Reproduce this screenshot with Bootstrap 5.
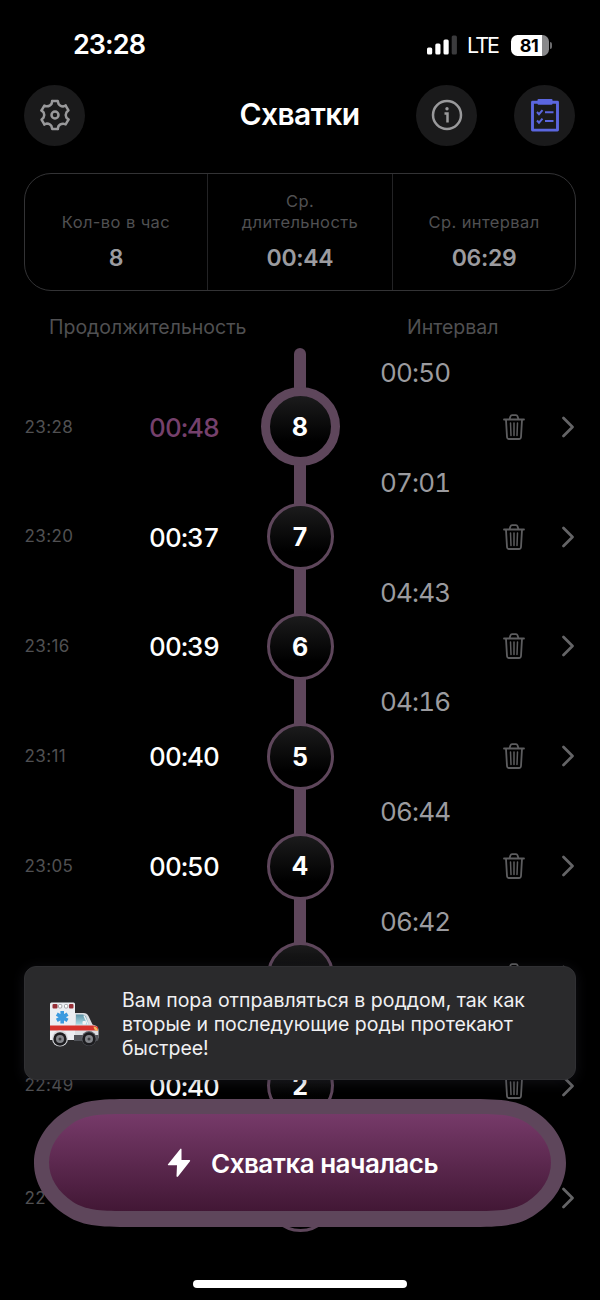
<!DOCTYPE html>
<html lang="ru" data-bs-theme="dark">
<head>
<meta charset="utf-8">
<meta name="viewport" content="width=device-width, initial-scale=1">
<title>Схватки</title>
<link href="https://cdn.jsdelivr.net/npm/bootstrap@5.3.0/dist/css/bootstrap.min.css" rel="stylesheet">
<style>
  :root { --plum: #5e465b; --dim: #505052; --soft: #9b9b9f; }
  body { background: #000; font-family: Inter, "Liberation Sans", sans-serif; color: #fff; }
  .screen { width: 600px; height: 1300px; background: #000; }
  .status { height: 84px; padding: 6px 48px 0 73px; }
  .clock { font-size: 27px; font-weight: 600; letter-spacing: -.95px; padding-top: 1px; }
  .lte { font-size: 21.5px; font-weight: 400; letter-spacing: -2px; margin: 0 12.5px 0 10.5px; }
  .battery { width: 38px; height: 21px; border-radius: 6.5px; background: linear-gradient(90deg, #fff 82%, #88888a 82%); color: #000; font-size: 18px; font-weight: 700; letter-spacing: -.4px; line-height: 21px; padding-right: 1px; }
  .battery-tip { width: 2px; height: 7px; border-radius: 0 3px 3px 0; background: #6b6b6d; margin-left: 1.5px; }
  .topbar { height: 62px; padding: 0 25px 0 24px; display: grid; grid-template-columns: 1fr auto 1fr; align-items: center; }
  .round-btn { width: 61px; height: 61px; border-radius: 50%; background: #1a1a1b; padding: 0; border: 0; }
  .title-text { font-size: 30px; font-weight: 600; line-height: 34px; letter-spacing: -.6px; padding-bottom: 2px; }
  .stats { margin: 27px 24px 0; height: 118px; border: 1.5px solid #333335; border-radius: 27px; }
  .stat { flex: 1 1 0; padding-bottom: 18px; }
  .stat:nth-child(2) { flex-grow: 1.012; }
  .stat + .stat { border-left: 1px solid #232325; }
  .stat-label { font-size: 16.5px; line-height: 21px; letter-spacing: .4px; color: var(--dim); }
  .stat-value { font-size: 23px; line-height: 28px; font-weight: 600; color: var(--soft); margin-top: 11px; letter-spacing: -.3px; }
  .heads { height: 57px; padding: 21px 0 0 49px; font-size: 19.5px; line-height: 30px; letter-spacing: 0; color: var(--dim); }
  .head-left { width: 358px; }
  .stub { width: 12px; height: 24px; margin: 0 auto; border-radius: 6px 6px 0 0; background: var(--plum); }
  .entry { height: 109.8px; padding: 0 26px 0 24.5px; }
  .entry-time { width: 124.5px; font-size: 17px; letter-spacing: .4px; color: var(--dim); padding-top: 1px; }
  .entry-len { width: 111px; font-size: 26px; font-weight: 500; letter-spacing: -.9px; font-variant-numeric: tabular-nums; padding-top: 1px; }
  .latest .entry-len { color: #75406c; }
  .node-cell { width: 80px; background: linear-gradient(var(--plum), var(--plum)) center top / 12px 100% no-repeat; }
  .node { width: 67px; height: 67px; border-radius: 50%; border: 3px solid var(--plum); background: linear-gradient(#1b1b1c, #000 75%); font-size: 25px; font-weight: 700; padding-top: 2px; }
  .latest .node { width: 79px; height: 79px; border-width: 9px; }
  .gap-text { width: 123px; margin: -14px 0 0 40px; font-size: 26px; line-height: 30px; letter-spacing: -.8px; font-variant-numeric: tabular-nums; color: var(--soft); }
  .final { margin-top: 3px; }
  .final .node-cell { background-size: 12px 50%; }
  .notice { left: 24px; right: 24px; top: 966px; height: 114px; border-radius: 12px; background: #2a2a2c; border: 1px solid #303033; box-shadow: 0 2px 14px rgba(50,50,62,.35); padding: 2px 0 0 24px; }
  .notice-text { margin-left: 23px; font-size: 19.5px; line-height: 24px; letter-spacing: 0; color: #f0f0f2; }
  .cta { left: 34px; top: 1099px; width: 532px; height: 128px; border: 0; background: transparent; padding: 0; }
  .cta-content { gap: 19px; padding-left: 4px; }
  .cta-label { font-size: 26px; font-weight: 600; color: #fff; letter-spacing: -.5px; }
  .home-bar { left: 193px; top: 1280px; width: 214px; height: 8px; border-radius: 4px; background: #fff; }
</style>
</head>
<body>
<svg width="0" height="0" class="position-absolute" aria-hidden="true">
  <symbol id="trash" viewBox="0 0 22 26"><g fill="none" stroke="#5d5d5f" stroke-linecap="round" stroke-linejoin="round"><path stroke-width="1.8" d="M1 5.500h20M3 5.700l1 17.300q.2 2 2 2h10q1.800 0 2-2l1-17.300M6.500 5.300l1-3q.4-1.100 1.500-1.100h4q1.100 0 1.500 1.100l1 3"/><path stroke-width="1.500" d="M7.500 9l.5 12.500M11 9v12.500M14.500 9l-.5 12.500"/></g></symbol>
  <symbol id="chev" viewBox="0 0 12 22"><path d="M1.500 2l9 9-9 9" fill="none" stroke="#646466" stroke-width="2.700" stroke-linecap="round" stroke-linejoin="round"/></symbol>
</svg>
<main class="screen position-relative overflow-hidden">
  <div class="status d-flex align-items-center">
    <span class="clock me-auto">23:28</span>
    <svg width="30" height="20" viewBox="0 0 30 20"><g fill="#fff"><rect x="0" y="12.500" width="5.200" height="7" rx="1.500"/><rect x="8.300" y="8.500" width="5.200" height="11" rx="1.500"/><rect x="16.500" y="4.500" width="5.200" height="15" rx="1.500"/></g><rect x="24.700" y="0.500" width="5.200" height="19" rx="1.500" fill="#3b3b3d"/></svg>
    <span class="lte">LTE</span>
    <span class="battery text-center">81</span><span class="battery-tip"></span>
  </div>

  <header class="topbar">
    <div>
      <button class="round-btn d-flex align-items-center justify-content-center" aria-label="Настройки">
        <svg width="32" height="32" viewBox="-16 -16 32 32"><defs><path id="tooth" d="M-2.800-13.900H2.800L3.500-11.200Q5-8.700 8-8.540L10.640-9.370"/></defs><g fill="none" stroke="#99999b" stroke-width="2.500" stroke-linejoin="round" stroke-linecap="round"><use href="#tooth"/><use href="#tooth" transform="rotate(60)"/><use href="#tooth" transform="rotate(120)"/><use href="#tooth" transform="rotate(180)"/><use href="#tooth" transform="rotate(240)"/><use href="#tooth" transform="rotate(300)"/><circle r="3.500"/></g></svg>
      </button>
    </div>
    <h1 class="title-text m-0">Схватки</h1>
    <div class="d-flex justify-content-end" style="gap:37px">
      <button class="round-btn d-flex align-items-center justify-content-center" aria-label="Информация">
        <svg width="32" height="32" viewBox="0 0 32 32"><circle cx="16" cy="16" r="14" fill="none" stroke="#99999b" stroke-width="2.500"/><path d="M13.500 14.500h3v9" fill="none" stroke="#99999b" stroke-width="2.500"/><circle cx="16" cy="9.800" r="1.700" fill="#99999b"/></svg>
      </button>
      <button class="round-btn d-flex align-items-center justify-content-center" aria-label="Чек-лист">
        <svg width="28" height="33" viewBox="0 0 28 33"><path d="M1.500 3.300h25v27.800h-25z" fill="none" stroke="#5b66df" stroke-width="2.900" stroke-linejoin="round"/><rect x="6.500" y="0" width="15" height="5.800" rx="1" fill="#5b66df"/><path d="M6 13l2 2.200 3.500-4M6 21.500l2 2.200 3.500-4M14 13.300h8.500M14 22h8.500" fill="none" stroke="#5b66df" stroke-width="2"/></svg>
      </button>
    </div>
  </header>

  <section class="stats d-flex text-center">
    <div class="stat d-flex flex-column justify-content-end"><div class="stat-label">Кол-во в час</div><div class="stat-value">8</div></div>
    <div class="stat d-flex flex-column justify-content-end"><div class="stat-label">Ср.<br>длительность</div><div class="stat-value">00:44</div></div>
    <div class="stat d-flex flex-column justify-content-end"><div class="stat-label">Ср. интервал</div><div class="stat-value">06:29</div></div>
  </section>

  <div class="heads d-flex"><span class="head-left">Продолжительность</span><span>Интервал</span></div>

  <section>
    <div class="stub"></div>
    <div class="entry latest d-flex align-items-center">
      <span class="entry-time">23:28</span><span class="entry-len">00:48</span>
      <div class="node-cell align-self-stretch d-flex align-items-center justify-content-center"><div class="node d-flex align-items-center justify-content-center flex-shrink-0">8</div></div>
      <span class="gap-text align-self-start">00:50</span>
      <svg width="22" height="26"><use href="#trash"/></svg><svg class="ms-auto" width="12" height="22"><use href="#chev"/></svg>
    </div>
    <div class="entry d-flex align-items-center">
      <span class="entry-time">23:20</span><span class="entry-len">00:37</span>
      <div class="node-cell align-self-stretch d-flex align-items-center justify-content-center"><div class="node d-flex align-items-center justify-content-center">7</div></div>
      <span class="gap-text align-self-start">07:01</span>
      <svg width="22" height="26"><use href="#trash"/></svg><svg class="ms-auto" width="12" height="22"><use href="#chev"/></svg>
    </div>
    <div class="entry d-flex align-items-center">
      <span class="entry-time">23:16</span><span class="entry-len">00:39</span>
      <div class="node-cell align-self-stretch d-flex align-items-center justify-content-center"><div class="node d-flex align-items-center justify-content-center">6</div></div>
      <span class="gap-text align-self-start">04:43</span>
      <svg width="22" height="26"><use href="#trash"/></svg><svg class="ms-auto" width="12" height="22"><use href="#chev"/></svg>
    </div>
    <div class="entry d-flex align-items-center">
      <span class="entry-time">23:11</span><span class="entry-len">00:40</span>
      <div class="node-cell align-self-stretch d-flex align-items-center justify-content-center"><div class="node d-flex align-items-center justify-content-center">5</div></div>
      <span class="gap-text align-self-start">04:16</span>
      <svg width="22" height="26"><use href="#trash"/></svg><svg class="ms-auto" width="12" height="22"><use href="#chev"/></svg>
    </div>
    <div class="entry d-flex align-items-center">
      <span class="entry-time">23:05</span><span class="entry-len">00:50</span>
      <div class="node-cell align-self-stretch d-flex align-items-center justify-content-center"><div class="node d-flex align-items-center justify-content-center">4</div></div>
      <span class="gap-text align-self-start">06:44</span>
      <svg width="22" height="26"><use href="#trash"/></svg><svg class="ms-auto" width="12" height="22"><use href="#chev"/></svg>
    </div>
    <div class="entry d-flex align-items-center">
      <span class="entry-time"></span><span class="entry-len"></span>
      <div class="node-cell align-self-stretch d-flex align-items-center justify-content-center"><div class="node"></div></div>
      <span class="gap-text align-self-start">06:42</span>
      <svg width="22" height="26"><use href="#trash"/></svg><svg class="ms-auto" width="12" height="22"><use href="#chev"/></svg>
    </div>
    <div class="entry d-flex align-items-center">
      <span class="entry-time">22:49</span><span class="entry-len">00:40</span>
      <div class="node-cell align-self-stretch d-flex align-items-center justify-content-center"><div class="node d-flex align-items-center justify-content-center">2</div></div>
      <span class="gap-text"></span>
      <svg width="22" height="26"><use href="#trash"/></svg><svg class="ms-auto" width="12" height="22"><use href="#chev"/></svg>
    </div>
    <div class="entry final d-flex align-items-center">
      <span class="entry-time">22</span><span class="entry-len"></span>
      <div class="node-cell align-self-stretch d-flex align-items-center justify-content-center"><div class="node"></div></div>
      <span class="gap-text"></span>
      <svg class="ms-auto" width="12" height="22"><use href="#chev"/></svg>
    </div>
  </section>

  <div class="notice position-absolute d-flex align-items-center">
    <svg width="50" height="46" viewBox="0 0 50 46" class="flex-shrink-0">
      <defs><linearGradient id="glass" x1="0" y1="0" x2="0" y2="1"><stop offset="0" stop-color="#5d93a6"/><stop offset="1" stop-color="#a9dbe6"/></linearGradient></defs>
      <path d="M25 12h9.500q3.500 0 5 3l4 8.500 4 1.500q2 1 2 4v7.500q0 1.500-2 1.500H25z" fill="#dcdee2"/>
      <path d="M2.500 1.500h22q1.500 0 1.500 1.500v36H1V3q0-1.500 1.500-1.500z" fill="#eceef2"/>
      <rect x="3.500" y="3" width="5" height="4.500" rx="1" fill="#973038"/><rect x="9.500" y="3.500" width="3.300" height="3.500" rx="1" fill="#fff" stroke="#8e9096" stroke-width=".8"/><rect x="15.500" y="3.500" width="3.300" height="3.500" rx="1" fill="#fff" stroke="#8e9096" stroke-width=".8"/><rect x="20" y="3" width="4.500" height="4.500" rx="1" fill="#973038"/>
      <path d="M27 13.500h6.500q2.500 0 3.500 2l3 8H27z" fill="url(#glass)"/><path d="M35 14.500l4 9" stroke="#eef1f4" stroke-width="1.300"/><rect x="33.500" y="20" width="3.500" height="3.500" rx="1" fill="#f3f4f6"/>
      <path d="M13.200 10v12.500M7.800 13.100l10.800 6.300M7.800 19.400l10.800-6.300" stroke="#3c9adf" stroke-width="3.600"/>
      <path d="M1 24.500h44l4 1.500v3.500H1z" fill="#d8332e"/><path d="M44.500 25.500q4 0 4.500 4.500-4 0-4.500-4.500" fill="#f5b45c"/>
      <path d="M25 34h24.500v4q0 2-2 2H25z" fill="#52545a"/>
      <circle cx="11" cy="37.500" r="8" fill="#d5d7db"/><circle cx="40" cy="37.500" r="7.500" fill="#606269"/>
      <circle cx="11" cy="38" r="6.700" fill="#1c1c1f"/><circle cx="11" cy="38" r="4" fill="#85878c"/><circle cx="11" cy="38" r="1.500" fill="#3d3e42"/>
      <circle cx="40" cy="38" r="6.700" fill="#1c1c1f"/><circle cx="40" cy="38" r="4" fill="#85878c"/><circle cx="40" cy="38" r="1.500" fill="#3d3e42"/>
    </svg>
    <div class="notice-text">Вам пора отправляться в роддом, так как<br>вторые и последующие роды протекают<br>быстрее!</div>
  </div>

  <button class="cta position-absolute">
    <svg class="position-absolute top-0 start-0" width="532" height="128" viewBox="0 0 532 128">
      <defs><linearGradient id="berry" x1="0" y1="0" x2="0" y2="1"><stop offset="0" stop-color="#763a69"/><stop offset="1" stop-color="#421735"/></linearGradient></defs>
      <path d="M98 0H434C468 0 485 1 502 13C521 26 532 44 532 64S521 102 502 115C485 127 468 128 434 128H98C64 128 47 127 30 115C11 102 0 84 0 64S11 26 30 13C47 1 64 0 98 0Z" fill="#5e465b"/>
      <path d="M90 15H442C467 15 480 16 493 24C508 34 517 48 517 63.500S508 93 493 103C480 111 467 112 442 112H90C65 112 52 111 39 103C24 93 15 79 15 63.500S24 34 39 24C52 16 65 15 90 15Z" fill="url(#berry)"/>
    </svg>
    <span class="cta-content position-relative d-flex align-items-center justify-content-center">
      <svg width="26" height="32" viewBox="0 0 26 32"><path d="M14.300 2L2 17.300q-.6 1 .5 1H11L10.500 29q.3 1.700 1.500.5L24 14.200q.6-1.200-.6-1.200H15.500V2.200Q15 .9 14.300 2z" fill="#fff"/></svg>
      <span class="cta-label">Схватка началась</span>
    </span>
  </button>
  <div class="home-bar position-absolute"></div>
</main>
<script src="https://cdn.jsdelivr.net/npm/bootstrap@5.3.0/dist/js/bootstrap.bundle.min.js"></script>
</body>
</html>
